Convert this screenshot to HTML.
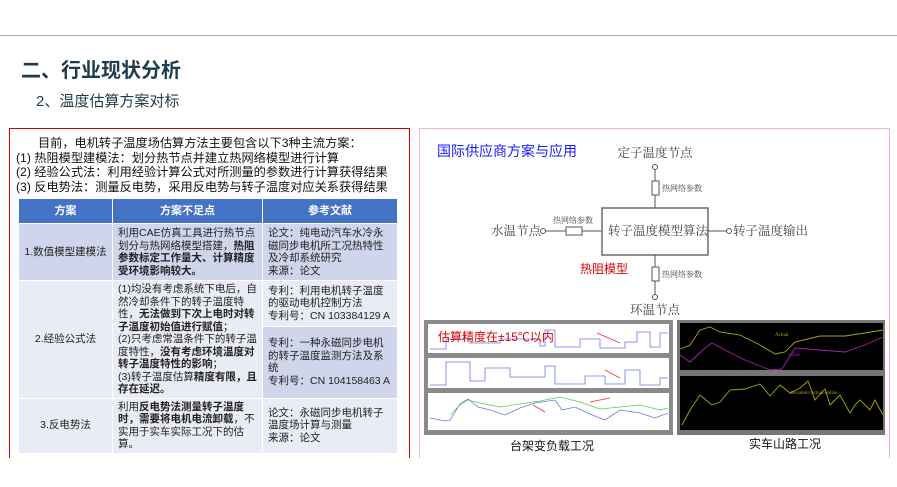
<!DOCTYPE html>
<html><head><meta charset="utf-8"><style>
*{margin:0;padding:0;box-sizing:border-box}
body{width:897px;height:487px;background:#fff;position:relative;overflow:hidden;font-family:"Liberation Sans","Microsoft YaHei","Noto Sans CJK SC",sans-serif;}
.a{position:absolute;white-space:nowrap}
table{border-collapse:collapse;position:absolute;left:18px;top:198px;width:380px;font-size:10.5px;color:#222;line-height:12.5px}
td{border:1px solid #fff;padding:2px 5px;vertical-align:middle}
th{background:#4472c4;color:#fff;font-weight:bold;font-size:11px;height:25px;border:1px solid #fff}
b{font-weight:bold}
</style></head><body>
<div class="a" style="left:0;top:35px;width:897px;height:1px;background:#aaa"></div>
<div class="a" style="left:21px;top:54px;font-size:20px;font-weight:bold;color:#1f3b4d">二、行业现状分析</div>
<div class="a" style="left:36px;top:90px;font-size:15px;color:#1f3b4d">2、温度估算方案对标</div>

<div class="a" style="left:9px;top:128px;width:401px;height:330px;border:1px solid #c00;border-bottom:none"></div>
<div class="a" style="left:16px;top:136px;font-size:12.2px;line-height:14.5px;color:#111">
<div style="padding-left:22px">目前，电机转子温度场估算方法主要包含以下3种主流方案：</div>
<div>(1) 热阻模型建模法：划分热节点并建立热网络模型进行计算</div>
<div>(2) 经验公式法：利用经验计算公式对所测量的参数进行计算获得结果</div>
<div>(3) 反电势法：测量反电势，采用反电势与转子温度对应关系获得结果</div>
</div>
<table>
<tr><th style="width:94px">方案</th><th style="width:150px">方案不足点</th><th>参考文献</th></tr>
<tr style="background:#cfd5ea;height:57px"><td style="text-align:center">1.数值模型建模法</td><td>利用CAE仿真工具进行热节点划分与热网络模型搭建，<b>热阻参数标定工作量大、计算精度受环境影响较大。</b></td><td>论文：纯电动汽车水冷永磁同步电机所工况热特性及冷却系统研究<br>来源：论文</td></tr>
<tr style="background:#e9ebf5;height:45px"><td rowspan="2" style="text-align:center">2.经验公式法</td><td rowspan="2">(1)均没有考虑系统下电后，自然冷却条件下的转子温度特性，<b>无法做到下次上电时对转子温度初始值进行赋值</b>；<br>(2)只考虑常温条件下的转子温度特性，<b>没有考虑环境温度对转子温度特性的影响</b>；<br>(3)转子温度估算<b>精度有限，且存在延迟。</b></td><td>专利：利用电机转子温度的驱动电机控制方法<br>专利号：CN 103384129 A</td></tr>
<tr style="height:71px"><td style="background:#cfd5ea">专利：一种永磁同步电机的转子温度监测方法及系统<br>专利号：CN 104158463 A</td></tr>
<tr style="background:#e9ebf5;height:54px"><td style="text-align:center">3.反电势法</td><td>利用<b>反电势法测量转子温度时，需要将电机电流卸载</b>，不实用于实车实际工况下的估算。</td><td>论文：永磁同步电机转子温度场计算与测量<br>来源：论文</td></tr>
</table>

<div class="a" style="left:419px;top:128px;width:471px;height:330px;border:1px solid #f0b8b8;border-bottom:none"></div>
<div class="a" style="left:437px;top:141px;font-size:14px;color:#1a1aff">国际供应商方案与应用</div>
<svg class="a" style="left:0;top:0" width="897" height="487" font-family="Liberation Serif,Noto Serif CJK SC,serif">
<g stroke="#555" fill="none" stroke-width="1">
<rect x="602" y="208" width="106" height="47" stroke-width="1.3"/>
<line x1="655" y1="170" x2="655" y2="208"/><circle cx="655" cy="167" r="2.5" fill="#fff"/>
<rect x="652" y="181" width="7" height="14" fill="#fff"/>
<line x1="655" y1="255" x2="655" y2="294"/><circle cx="655" cy="297" r="2.5" fill="#fff"/>
<rect x="652" y="267" width="7" height="14" fill="#fff"/>
<line x1="545" y1="231" x2="602" y2="231"/><circle cx="543" cy="231" r="2.5" fill="#fff"/>
<rect x="566" y="227" width="16" height="8" fill="#fff"/>
<line x1="708" y1="231" x2="727" y2="231"/><circle cx="729" cy="231" r="2.5" fill="#fff"/>
</g>
<g fill="#444">
<text x="655" y="157" font-size="12.5" text-anchor="middle">定子温度节点</text>
<text x="662" y="191" font-size="8">热网络参数</text>
<text x="662" y="277" font-size="8">热网络参数</text>
<text x="553" y="223" font-size="8">热网络参数</text>
<text x="491" y="235" font-size="12.5">水温节点</text>
<text x="608" y="235" font-size="12.5">转子温度模型算法</text>
<text x="733" y="235" font-size="12.5">转子温度输出</text>
<text x="655" y="314" font-size="12.5" text-anchor="middle">环温节点</text>
</g>
<text x="580" y="273" font-size="12" fill="#d00" font-family="Liberation Sans,Noto Sans CJK SC,sans-serif">热阻模型</text>
<rect x="424" y="320" width="249" height="115" fill="#8a8a8a"/>
<rect x="428" y="324" width="241" height="29" fill="#fff"/>
<rect x="428" y="358" width="241" height="30" fill="#fff"/>
<rect x="428" y="393" width="241" height="37" fill="#fff"/>
<g stroke="#6a78e6" fill="none" stroke-width="0.8">
<polyline points="430,349 446,349 446,339 470,339 470,343 500,343 500,339 540,339 540,346 545,346 545,330 555,330 555,347 580,347 580,339 600,339 600,348 625,348 625,342 637,342 637,332 650,332 650,347 660,347 660,333 668,333"/>
<polyline points="430,385 446,385 446,362 470,362 470,381 485,381 485,368 510,368 510,377 545,377 545,366 555,366 555,384 585,384 585,376 605,376 605,384 625,384 625,370 640,370 640,385 660,385 660,378 668,378"/>
<polyline points="430,418 445,421 450,420 460,404 468,399 478,407 490,410 505,415 520,408 535,403 555,400 562,410 575,407 590,414 605,420 620,410 640,413 655,418 668,413"/>
</g>
<polyline points="450,415 460,405 468,400 480,403 500,407 520,404 540,401 560,397 580,402 600,409 620,407 640,405 660,410 668,408" stroke="#5c5" fill="none" stroke-width="0.7"/>
<text x="438" y="341" font-size="12" fill="#d00" font-family="Liberation Sans,Noto Sans CJK SC,sans-serif">估算精度在±15℃以内</text>
<g stroke="#e33" stroke-width="0.8"><line x1="597" y1="333" x2="620" y2="343"/><line x1="605" y1="370" x2="620" y2="378"/><line x1="590" y1="402" x2="610" y2="398"/><line x1="533" y1="405" x2="545" y2="412"/></g>
<rect x="677" y="320" width="208" height="115" fill="#777"/>
<rect x="680" y="323" width="203" height="47" fill="#000"/>
<rect x="680" y="376" width="203" height="54" fill="#000"/>
<polyline points="680,349 690,345 700,330 710,327 720,332 740,335 760,345 775,354 785,352 795,342 820,336 845,336 865,333 883,330" stroke="#aa0" fill="none" stroke-width="0.9"/>
<polyline points="680,355 690,362 705,348 712,343 725,350 745,360 770,370 782,369 795,348 820,350 845,352 865,345 883,337" stroke="#a2a" fill="none" stroke-width="0.9"/>
<polyline points="682,425 690,410 700,395 712,405 720,402 730,390 745,389 760,384 770,396 780,385 790,393 800,388 808,381 815,400 825,389 830,405 840,395 850,413 855,405 860,400 870,410 875,400 883,415" stroke="#aa0" fill="none" stroke-width="0.9"/>
<text x="775" y="336" font-size="5" fill="#aa0">Actual</text>
<text x="788" y="356" font-size="5" fill="#a2a">online</text>
<text x="790" y="394" font-size="5" fill="#aa0">deviation=actual-online</text>
<g font-family="Liberation Sans,Noto Sans CJK SC,sans-serif" font-size="12" fill="#111">
<text x="510" y="450">台架变负载工况</text>
<text x="749" y="448">实车山路工况</text>
</g>
</svg>
</body></html>
